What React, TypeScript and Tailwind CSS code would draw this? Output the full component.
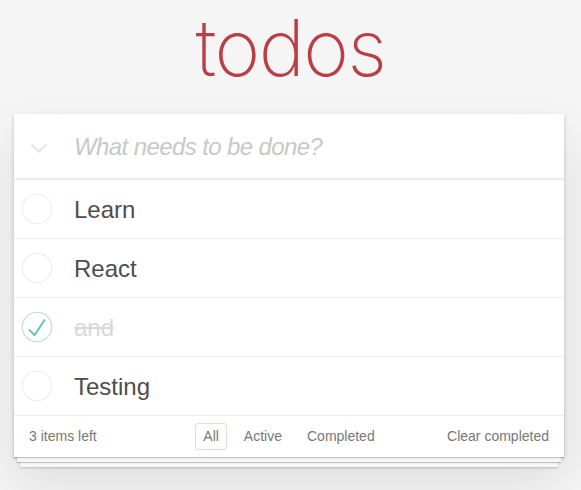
import {useState} from "react";

type Todo = {id: number; title: string; done: boolean};

const initial: Todo[] = [
  {id: 1, title: "Learn", done: false},
  {id: 2, title: "React", done: false},
  {id: 3, title: "and", done: true},
  {id: 4, title: "Testing", done: false},
];

function Toggle({done}: {done: boolean}) {
  return (
    <svg width="32" height="32" viewBox="0 0 100 100" className="shrink-0">
      <circle cx="50" cy="50" r="46" fill="none" stroke={done ? "#bddad5" : "#ededed"} strokeWidth="3.5" />
      {done && <path d="M72 25L42 71 27 56l-4 4 20 20 34-52z" fill="#5dc2af" />}
    </svg>
  );
}

export default function App() {
  const [todos, setTodos] = useState<Todo[]>(initial);
  const left = todos.filter((t) => !t.done).length;

  return (
    <div className="min-h-screen bg-[#f5f5f5] font-['Liberation_Sans',Arial,sans-serif] text-[#4d4d4d]">
      <h1 className="h-[114px] pt-[8px] text-center text-[78px] leading-[80px] font-extralight tracking-[-1.5px] text-[#b83f45] font-['Inter',sans-serif]">
        todos
      </h1>
      <section className="relative isolate ml-[14px] w-[550px] bg-white shadow-[0_2px_4px_0_rgba(0,0,0,0.2),0_25px_50px_0_rgba(0,0,0,0.1)]">
        <header className="flex h-[65px] items-center shadow-[inset_0_-2px_1px_rgba(0,0,0,0.03)]">
          <div className="flex w-[60px] pl-[16px] pt-[2px]">
            <svg width="18" height="10" viewBox="0 0 18 10">
              <path d="M1.5 1.5L9 8.5L16.5 1.5" fill="none" stroke="#e6e6e6" strokeWidth="2.2" />
            </svg>
          </div>
          <input
            className="h-full flex-1 bg-transparent pr-4 text-[24px] outline-none placeholder:italic placeholder:tracking-[-0.6px] placeholder:text-[#c8c8c8]"
            placeholder="What needs to be done?"
          />
        </header>
        <ul className="border-t border-[#e6e6e6]">
          {todos.map((t) => (
            <li key={t.id} className="flex h-[59px] items-center border-b border-[#ededed] text-[24px]">
              <button
                className="flex w-[60px] items-center pl-[7px]"
                onClick={() => setTodos(todos.map((x) => (x.id === t.id ? {...x, done: !x.done} : x)))}
              >
                <Toggle done={t.done} />
              </button>
              <span className={t.done ? "pt-[2px] text-[#d9d9d9] line-through" : "pt-[2px]"}>{t.title}</span>
            </li>
          ))}
        </ul>
        <footer className="relative flex h-[41px] items-center px-[15px] text-[14px] text-[#777]">
          <div className="absolute inset-x-0 bottom-0 -z-10 h-[50px] shadow-[0_1px_1px_rgba(0,0,0,0.2),0_8px_0_-3px_#f6f6f6,0_9px_1px_-3px_rgba(0,0,0,0.2),0_16px_0_-6px_#f6f6f6,0_17px_2px_-6px_rgba(0,0,0,0.2)]" />
          <span className="w-[120px]">{left} items left</span>
          <div className="flex flex-1 justify-center gap-[9px]">
            <a className="rounded-[3px] border border-[rgba(175,47,47,0.2)] px-[7px] py-[2px]">All</a>
            <a className="rounded-[3px] border border-transparent px-[7px] py-[2px]">Active</a>
            <a className="rounded-[3px] border border-transparent px-[7px] py-[2px]">Completed</a>
          </div>
          <span className="w-[120px] text-right">Clear completed</span>
        </footer>
      </section>
    </div>
  );
}
